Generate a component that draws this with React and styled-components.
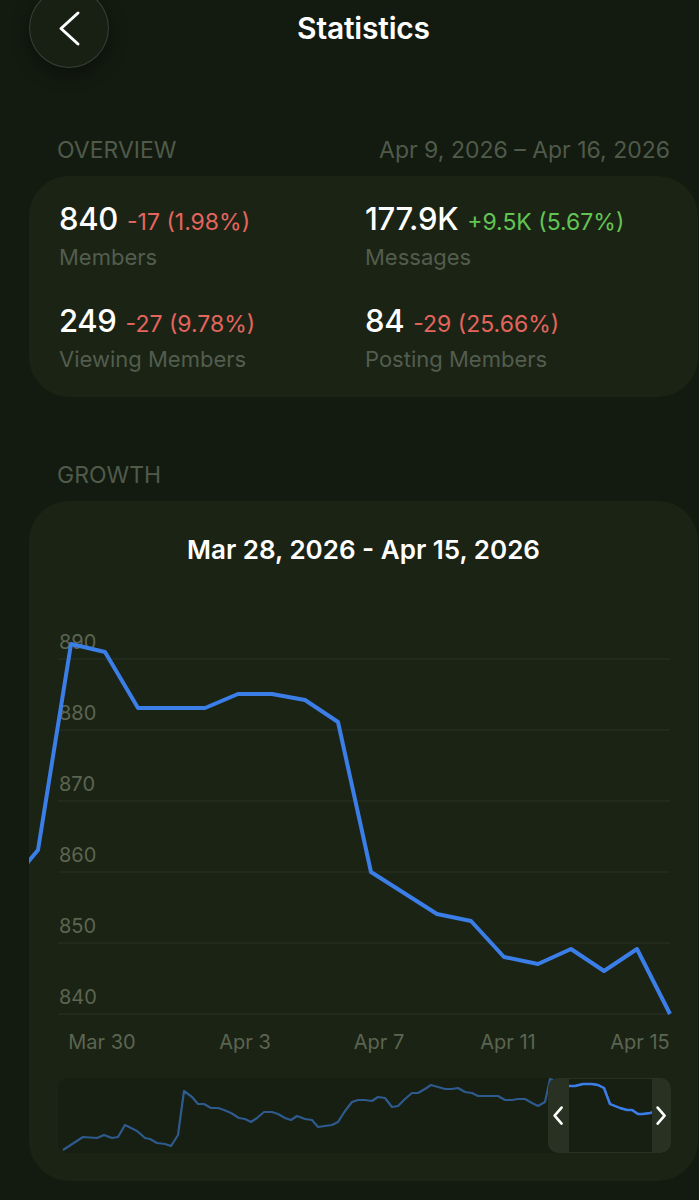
import React from 'react'
import styled, { createGlobalStyle } from 'styled-components'

const GlobalStyle = createGlobalStyle`
  html, body {
    margin: 0;
    padding: 0;
    background: #131a0f;
    overflow: hidden;
  }
  body {
    font-family: Inter, "Noto Sans", sans-serif;
    color: #ffffff;
    -webkit-font-smoothing: antialiased;
  }
`

const Page = styled.div`
  width: 727px;
  min-height: 1200px;
  padding: 0 29px;
  box-sizing: border-box;
  background: #131a0f;
`

const Header = styled.header`
  height: 56px;
  display: grid;
  grid-template-columns: 1fr auto 1fr;
  grid-template-rows: 56px;
  align-items: center;
`

const BackSlot = styled.div`
  height: 56px;
`

const BackButton = styled.button`
  width: 80px;
  height: 80px;
  margin-top: -12px;
  border-radius: 50%;
  border: 1.5px solid rgba(255, 255, 255, 0.14);
  background: #182014;
  box-shadow: 0 6px 18px rgba(0, 0, 0, 0.35);
  display: flex;
  align-items: center;
  justify-content: center;
  padding: 0;
  svg {
    display: block;
  }
`

const Title = styled.h1`
  margin: 0;
  font-size: 30px;
  line-height: 36px;
  font-weight: 600;
  letter-spacing: -0.2px;
  color: #ffffff;
`

const SectionHead = styled.div`
  display: flex;
  justify-content: space-between;
  align-items: center;
  height: 28px;
  padding: 0 28px;
  margin: ${({ $top }) => $top}px 0 12px;
  font-size: 23px;
  line-height: 28px;
  color: #4f5a4b;
`

const SectionLabel = styled.span`
  text-transform: uppercase;
`

const Card = styled.section`
  background: #1b2315;
  border-radius: 40px;
  box-sizing: border-box;
`

const OverviewGrid = styled(Card)`
  height: 221px;
  padding: 25px 30px 24px;
  display: grid;
  grid-template-columns: 306px 1fr;
  row-gap: 32px;
`

const Stat = styled.div`
  display: flex;
  flex-direction: column;
  gap: 6px;
`

const StatLine = styled.div`
  display: flex;
  align-items: baseline;
  gap: 9px;
  white-space: nowrap;
`

const StatValue = styled.span`
  font-size: 31px;
  line-height: 36px;
  font-weight: 500;
  letter-spacing: -0.3px;
  color: #ffffff;
`

const StatDelta = styled.span`
  font-size: 23px;
  line-height: 28px;
  color: ${({ $up }) => ($up ? '#62c553' : '#e4655d')};
`

const StatLabel = styled.span`
  font-size: 22px;
  line-height: 28px;
  color: #525d4e;
`

const GrowthCard = styled(Card)`
  height: 680px;
  padding: 34px 0 28px;
  display: flex;
  flex-direction: column;
  overflow: hidden;
`

const RangeTitle = styled.h2`
  margin: 0;
  text-align: center;
  font-size: 26px;
  line-height: 30px;
  font-weight: 600;
  color: #ffffff;
`

const ChartSvg = styled.svg`
  display: block;
  margin-top: 56px;
  flex-shrink: 0;
  text {
    font-family: Inter, "Noto Sans", sans-serif;
    font-size: 20px;
    fill: #5b6551;
  }
`

const Minimap = styled.div`
  position: relative;
  margin: 17px 27px 0 29px;
  height: 75px;
  border-radius: 9px;
  background: #171e12;
  svg {
    display: block;
  }
`

const Window = styled.div`
  position: absolute;
  top: 0;
  bottom: 0;
  right: 0;
  width: 123px;
  display: flex;
  border-radius: 10px;
  overflow: hidden;
`

const Handle = styled.div`
  width: ${({ $w }) => $w}px;
  background: #283122;
  display: flex;
  align-items: center;
  justify-content: center;
`

const WindowInner = styled.div`
  flex: 1;
  border-top: 1.5px solid #283122;
  border-bottom: 1.5px solid #283122;
`

const mainPoints = [
  [-24, 269], [9, 229], [42, 23], [76, 31], [109, 87], [143, 87], [176, 87],
  [209, 73], [243, 73], [276, 79], [309, 101], [342, 251], [375, 272],
  [408, 293], [442, 300], [475, 336], [509, 343], [542, 328], [575, 350],
  [608, 328], [641, 393],
]

const gridYs = [38, 109, 180, 251, 322, 393]
const yLabels = ['890', '880', '870', '860', '850', '840']
const xLabels = [
  ['Mar 30', 73],
  ['Apr 3', 216],
  ['Apr 7', 350],
  ['Apr 11', 479],
  ['Apr 15', 611],
]

const miniPoints = [
  [5, 72], [25, 59], [39, 60], [46, 57], [54, 60], [60, 59], [67, 47], [79, 53],
  [87, 60], [92, 61], [99, 65], [107, 66], [113, 68], [120, 57], [126, 13],
  [134, 19], [140, 26], [146, 26], [153, 30], [160, 30], [166, 32], [173, 35],
  [181, 40], [187, 41], [193, 44], [199, 40], [206, 34], [214, 34], [220, 36],
  [227, 40], [233, 42], [239, 38], [247, 41], [254, 42], [260, 49], [267, 48],
  [274, 47], [280, 44], [287, 33], [294, 24], [300, 22], [307, 22], [314, 23],
  [320, 19], [327, 20], [334, 29], [340, 28], [347, 21], [354, 15], [360, 15],
  [367, 11], [373, 7], [380, 9], [387, 11], [394, 11], [400, 10], [407, 14],
  [414, 15], [420, 18], [427, 18], [434, 18], [440, 18], [447, 22], [454, 22],
  [460, 21], [467, 21], [474, 25], [480, 28], [487, 24], [492, 1], [498, 3],
  [504, 7], [510, 8], [517, 8], [525, 6], [534, 6], [540, 7], [546, 10],
  [552, 26], [562, 30], [569, 32], [574, 32], [580, 36], [585, 36], [592, 35],
  [599, 33], [605, 41], [612, 44],
]

const toPath = (pts) => pts.map(([x, y], i) => `${i ? 'L' : 'M'}${x} ${y}`).join(' ')

const Chevron = ({ dir = 'left', w = 17, h = 31, stroke = 3 }) => (
  <svg width={w + stroke * 2} height={h + stroke * 2} viewBox={`0 0 ${w + stroke * 2} ${h + stroke * 2}`}>
    <path
      d={dir === 'left'
        ? `M${w + stroke} ${stroke} L${stroke} ${h / 2 + stroke} L${w + stroke} ${h + stroke}`
        : `M${stroke} ${stroke} L${w + stroke} ${h / 2 + stroke} L${stroke} ${h + stroke}`}
      fill="none"
      stroke="#ffffff"
      strokeWidth={stroke}
      strokeLinecap="round"
      strokeLinejoin="round"
    />
  </svg>
)

const StatItem = ({ value, delta, up, label }) => (
  <Stat>
    <StatLine>
      <StatValue>{value}</StatValue>
      <StatDelta $up={up}>{delta}</StatDelta>
    </StatLine>
    <StatLabel>{label}</StatLabel>
  </Stat>
)

const GrowthChart = () => (
  <ChartSvg width="669" height="440" viewBox="0 0 669 440">
    {gridYs.map((y, i) => (
      <g key={y}>
        <line x1="29" x2="641" y1={y} y2={y} stroke="#2b3326" strokeWidth="1.2" />
        <text x="30" y={y - 10}>{yLabels[i]}</text>
      </g>
    ))}
    {xLabels.map(([t, x]) => (
      <text key={t} x={x} y="428" textAnchor="middle">{t}</text>
    ))}
    <path d={toPath(mainPoints)} fill="none" stroke="#3b7ee8" strokeWidth="4" strokeLinejoin="round" />
  </ChartSvg>
)

const MiniChart = () => (
  <Minimap>
    <svg width="613" height="75" viewBox="0 0 613 75">
      <defs>
        <clipPath id="win">
          <rect x="511" y="0" width="83" height="75" />
        </clipPath>
      </defs>
      <path d={toPath(miniPoints)} fill="none" stroke="#2e5a8e" strokeWidth="2.2" strokeLinejoin="round" />
      <path d={toPath(miniPoints)} clipPath="url(#win)" fill="none" stroke="#3b7ee8" strokeWidth="2.4" strokeLinejoin="round" />
    </svg>
    <Window>
      <Handle $w={21}><Chevron dir="left" w={7} h={16} stroke={2.6} /></Handle>
      <WindowInner />
      <Handle $w={19}><Chevron dir="right" w={7} h={16} stroke={2.6} /></Handle>
    </Window>
  </Minimap>
)

export default function App() {
  return (
    <Page>
      <GlobalStyle />
      <Header>
        <BackSlot>
          <BackButton aria-label="Back">
            <Chevron dir="left" />
          </BackButton>
        </BackSlot>
        <Title>Statistics</Title>
        <div />
      </Header>

      <SectionHead $top={80}>
        <SectionLabel>Overview</SectionLabel>
        <span>Apr 9, 2026 – Apr 16, 2026</span>
      </SectionHead>
      <OverviewGrid>
        <StatItem value="840" delta="-17 (1.98%)" label="Members" />
        <StatItem value="177.9K" delta="+9.5K (5.67%)" up label="Messages" />
        <StatItem value="249" delta="-27 (9.78%)" label="Viewing Members" />
        <StatItem value="84" delta="-29 (25.66%)" label="Posting Members" />
      </OverviewGrid>

      <SectionHead $top={64}>
        <SectionLabel>Growth</SectionLabel>
      </SectionHead>
      <GrowthCard>
        <RangeTitle>Mar 28, 2026 - Apr 15, 2026</RangeTitle>
        <GrowthChart />
        <MiniChart />
      </GrowthCard>
    </Page>
  )
}
